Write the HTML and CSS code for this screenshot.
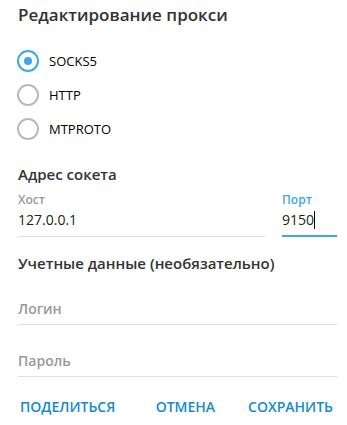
FILE: index.html
```html
<!DOCTYPE html>
<html>
<head>
    <meta charset="utf-8" />
    <title>Редактирование прокси</title>
    <link rel="stylesheet" href="styles.css">
</head>
<body>
    <div class="Box">
        <h1 class="Title">Редактирование прокси</h1>
        <div class="Types">
            <label class="Radio"><span class="Dot on"></span>SOCKS5</label>
            <label class="Radio"><span class="Dot"></span>HTTP</label>
            <label class="Radio"><span class="Dot"></span>MTPROTO</label>
        </div>
        <h2 class="Section">Адрес сокета</h2>
        <div class="Row">
            <div class="Field host">
                <div class="Label">Хост</div>
                <div class="Value">127.0.0.1</div>
            </div>
            <div class="Field port active">
                <div class="Label">Порт</div>
                <div class="Value">9150<span class="Caret"></span></div>
            </div>
        </div>
        <h2 class="Section creds">Учетные данные (необязательно)</h2>
        <div class="Field wide">
            <div class="Value empty">Логин</div>
        </div>
        <div class="Field wide">
            <div class="Value empty">Пароль</div>
        </div>
        <div class="Buttons">
            <span class="Button share">ПОДЕЛИТЬСЯ</span>
            <span class="Button">ОТМЕНА</span>
            <span class="Button">СОХРАНИТЬ</span>
        </div>
    </div>
</body>
</html>
```

FILE: styles.css
```css
body {
    margin: 0;
    background: #fff;
    font-family: "Open Sans", sans-serif;
    color: #222;
}
.Box {
    padding: 0 10px 0 18px;
}
.Title {
    margin: 0;
    padding-top: 4px;
    font-size: 17px;
    font-weight: 600;
    color: #333;
    line-height: 22px;
}
.Types {
    display: flex;
    flex-direction: column;
    gap: 12px;
    margin-top: 24px;
}
.Radio {
    display: flex;
    align-items: center;
    gap: 10px;
    height: 22px;
    font-size: 13px;
    color: #000;
}
.Dot {
    width: 18px;
    height: 18px;
    border: 2px solid #bababa;
    border-radius: 50%;
    margin-left: -1px;
    display: flex;
    align-items: center;
    justify-content: center;
}
    .Dot.on {
        border-color: #40a7e3;
    }
    .Dot.on::after {
        content: "";
        width: 8px;
        height: 8px;
        border-radius: 50%;
        background: #40a7e3;
    }
.Section {
    margin: 24px 0 0;
    font-size: 15px;
    font-weight: 600;
    color: #333;
    line-height: 20px;
}
    .Section.creds {
        margin-top: 16px;
    }
.Row {
    display: flex;
    gap: 17px;
    margin-top: 6px;
}
.Field {
    border-bottom: 1px solid #e0e0e0;
}
    .Field.host {
        flex: 1;
    }
    .Field.port {
        width: 55px;
    }
    .Field.active {
        border-bottom: 2px solid #40a7e3;
    }
    .Field.wide {
        margin-top: 26px;
    }
.Label {
    font-size: 12px;
    font-weight: 600;
    color: #999;
    line-height: 20px;
}
    .active .Label {
        color: #40a7e3;
    }
.Value {
    font-size: 14px;
    line-height: 20px;
    padding-bottom: 5px;
}
    .Value.empty {
        color: #999;
        font-weight: 600;
    }
.Caret {
    display: inline-block;
    width: 1px;
    height: 18px;
    background: #000;
    vertical-align: -4px;
}
.Buttons {
    display: flex;
    gap: 33px;
    margin-top: 20px;
    padding: 0 4px 0 2px;
}
.Button {
    font-size: 14px;
    font-weight: 600;
    color: #168acd;
    line-height: 20px;
}
    .Button.share {
        margin-right: auto;
    }
```
